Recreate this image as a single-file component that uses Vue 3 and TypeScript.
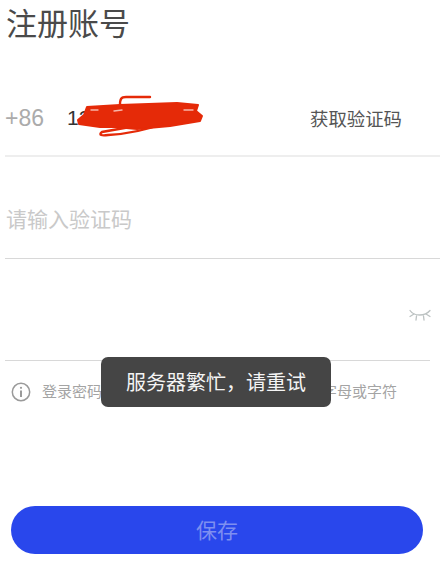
<script setup lang="ts">
const title = '注册账号'
</script>

<template>
  <div class="page">
    <h1 class="title">{{ title }}</h1>
    <div class="row phone">
      <span class="code">+86</span>
      <span class="num">126<svg class="scribble" width="130" height="44" viewBox="0 0 130 44" fill="none">
        <path d="M11 12 L44 10 L101 8 L122 10 L120 16 L126 21 L124 26 L94 31 L61 34 L40 32 L24 32 L3 29 L2 25 L8 20Z" fill="#e52a08" stroke="#e52a08" stroke-width="2" stroke-linejoin="round"/>
        <path d="M54 32 L26 37 C22 40 26 41 32 40 C50 39 70 35 86 29" stroke="#e52a08" stroke-width="2.4" stroke-linecap="round"/>
        <path d="M44 10 C44 4 45 2 50 2 L74 2" stroke="#e52a08" stroke-width="2.4" stroke-linecap="round"/>
        <path d="M15 15 L22 15 M38 16 L46 15 M108 15 L117 15" stroke="#f7b5a8" stroke-width="1.4" stroke-linecap="round"/>
      </svg></span>
      <span class="get">获取验证码</span>
    </div>
    <div class="row verify">
      <span class="placeholder">请输入验证码</span>
    </div>
    <div class="row pwd">
      <svg class="eye" width="24" height="14" viewBox="0 0 24 14" fill="none" stroke="#bcc2c2" stroke-width="1.3" stroke-linecap="round">
        <path d="M2 2.5 C6 8.5 17 8.5 22 2.5"/>
        <path d="M2 8.5 L6 6"/>
        <path d="M22 8.5 L18 6"/>
        <path d="M8.5 8 L8 12"/>
        <path d="M15.5 8 L16 12"/>
      </svg>
    </div>
    <div class="hint">
      <svg class="info" width="20" height="20" viewBox="0 0 20 20" fill="none" stroke="#9a9a9a">
        <circle cx="10" cy="10" r="8.7" stroke-width="1.5"/>
        <path d="M10 8.6 V15" stroke-width="2"/>
        <circle cx="10" cy="5.8" r="1.1" fill="#9a9a9a" stroke="none"/>
      </svg>
      <span class="hint-text">登录密码长度为8 - 16位，必须包含数字、字母或字符</span>
    </div>
    <button class="save" type="button">保存</button>
    <div class="toast">服务器繁忙，请重试</div>
  </div>
</template>

<style>
html, body { margin: 0; background: #fff; }
</style>

<style scoped>
.page {
  position: relative;
  width: 440px;
  height: 573px;
  overflow: hidden;
  background: #fff;
  font-family: "Noto Sans CJK SC", "Liberation Sans", sans-serif;
  box-sizing: border-box;
  padding: 4px 0 0 5px;
}
.title {
  margin: 0 0 0 1px;
  font-size: 31px;
  line-height: 36px;
  font-weight: 400;
  color: #4a4a4a;
}
.row {
  display: flex;
  align-items: center;
  box-sizing: border-box;
  height: 102px;
  border-bottom: 1px solid #d8d8d8;
}
.phone {
  height: 117px;
  padding-top: 41px;
  border-bottom-color: #eeeeee;
  border-bottom-width: 2px;
}
.code {
  width: 62px;
  font-family: "Liberation Sans", sans-serif;
  font-size: 23px;
  color: #ababab;
}
.num {
  position: relative;
  font-family: "Liberation Sans", sans-serif;
  font-size: 21px;
  line-height: 24px;
  color: #333;
}
.scribble {
  position: absolute;
  left: 9px;
  top: -11px;
}
.get {
  margin-left: auto;
  margin-right: 38px;
  font-size: 18.4px;
  color: #555;
}
.verify {
  padding: 21px 1px 0;
}
.placeholder {
  font-size: 21px;
  color: #c9c9c9;
}
.pwd {
  width: 425px;
  justify-content: flex-end;
  padding: 11px 0 0;
}
.eye {
  display: block;
  margin-right: -2px;
}
.hint {
  display: flex;
  align-items: center;
  gap: 11px;
  margin: 21px 0 0 6px;
  font-size: 15px;
  line-height: 20px;
  color: #a4a4a4;
  white-space: nowrap;
}
.hint-text {
  margin-top: -2px;
  word-spacing: 1.5px;
}
.save {
  display: block;
  width: 412px;
  height: 48px;
  margin: 104px 0 0 6px;
  padding: 0 0 2px;
  border: 0;
  border-radius: 24px;
  background: #2947ec;
  color: #7e8ff0;
  font-family: inherit;
  font-size: 21px;
}
.toast {
  position: absolute;
  left: 101px;
  top: 357px;
  width: 230px;
  height: 50px;
  border-radius: 7px;
  background: #454545;
  color: #f4f4f4;
  font-size: 20px;
  line-height: 49px;
  text-align: center;
}
</style>
